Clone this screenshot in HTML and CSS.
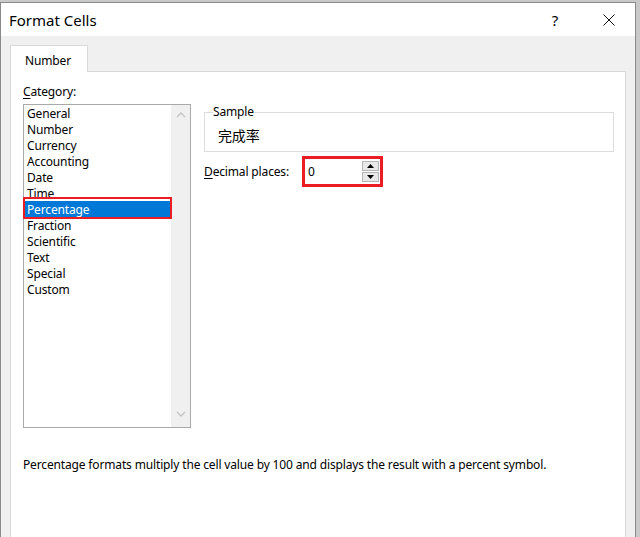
FILE: index.html
```html
<!DOCTYPE html>
<html lang="en">
<head>
<meta charset="UTF-8">
<meta name="viewport" content="width=device-width,initial-scale=1.0">
<title>Format Cells</title>
<link rel="stylesheet" href="styles.css">
</head>
<body>
<!-- ===== dialog window ===== -->
<div class="dialog">
  <div class="titlebar">
    <span class="title">Format Cells</span>
    <span class="help">?</span>
    <span class="close">
      <svg width="12" height="12" viewBox="0 0 12 12"><path d="M0.5 0.5L11.5 11.5M11.5 0.5L0.5 11.5" stroke="#111" stroke-width="1"/></svg>
    </span>
  </div>

  <div class="body">
    <div class="tabs">
      <div class="tab">Number</div>
    </div>

    <div class="panel">
      <div class="cols">
        <!-- category list -->
        <div class="cat-col">
          <div class="label"><u>C</u>ategory:</div>
          <div class="listbox">
            <ul class="items">
              <li>General</li>
              <li>Number</li>
              <li>Currency</li>
              <li>Accounting</li>
              <li>Date</li>
              <li>Time</li>
              <li class="selected">Percentage</li>
              <li>Fraction</li>
              <li>Scientific</li>
              <li>Text</li>
              <li>Special</li>
              <li>Custom</li>
            </ul>
            <div class="scrollbar">
              <svg width="10" height="6" viewBox="0 0 10 6"><path d="M1 5L5 1L9 5" fill="none" stroke="#c2c2c2" stroke-width="1.3"/></svg>
              <svg width="10" height="6" viewBox="0 0 10 6"><path d="M1 1L5 5L9 1" fill="none" stroke="#c2c2c2" stroke-width="1.3"/></svg>
            </div>
          </div>
        </div>

        <!-- options for the chosen format -->
        <div class="fmt-col">
          <fieldset class="sample">
            <legend>Sample</legend>
            <div class="sample-val">完成率</div>
          </fieldset>
          <div class="decimals">
            <label><u>D</u>ecimal places:</label>
            <div class="mark">
              <div class="spin">
                <span class="spin-val">0</span>
                <div class="spin-btns">
                  <div class="spin-btn"><svg width="7" height="4" viewBox="0 0 7 4"><path d="M0 4L3.5 0L7 4Z" fill="#000"/></svg></div>
                  <div class="spin-btn"><svg width="7" height="4" viewBox="0 0 7 4"><path d="M0 0L3.5 4L7 0Z" fill="#000"/></svg></div>
                </div>
              </div>
            </div>
          </div>
        </div>
      </div>

      <p class="desc">Percentage formats multiply the cell value by 100 and displays the result with a percent symbol.</p>
    </div>
  </div>
</div>
</body>
</html>
```

FILE: styles.css
```css
/* ==== general ==== */
*{box-sizing:border-box;margin:0;padding:0}
html,body{height:100%}
body{
  background:#c9c9c9;
  overflow:hidden;
  font-family:"Noto Sans","Noto Sans CJK SC",sans-serif;
  font-size:12px;
  letter-spacing:-0.15px;
  color:#000;
}
u{text-decoration:underline;text-underline-offset:2px}

/* ==== window ==== */
.dialog{
  margin-top:2px;
  width:636px;height:560px;
  border:1px solid #8a8a8a;border-bottom:none;
  background:#f0f0f0;
  display:flex;flex-direction:column;
}
.titlebar{
  height:33px;background:#fff;
  display:flex;align-items:center;
  padding-left:8px;
}
.title{font-size:15px;flex:1;padding-top:1px;letter-spacing:0}
.help{font-size:15px;margin-right:45px;padding-top:1px}
.close{display:flex;margin-right:20px}

/* ==== tab page ==== */
.body{flex:1;padding:9px 9px 0}
.tabs{display:flex;margin-bottom:-1px;position:relative;z-index:1}
.tab{
  width:78px;height:27px;
  background:#fff;
  border:1px solid #d9d9d9;border-bottom:none;
  padding:6px 0 0 14px;
}
.panel{
  background:#fff;border:1px solid #d9d9d9;
  height:480px;
  padding:12px 11px 0 12px;
}
.cols{display:flex;gap:13px;align-items:flex-start}

/* ==== category list ==== */
.label{line-height:16px}
.listbox{
  margin-top:4px;
  width:168px;height:324px;
  border:1px solid #a9a9a9;
  display:flex;
}
.items{list-style:none;width:147px}
.items li{line-height:17px;height:16px;padding-left:3px;white-space:nowrap}
.items li.selected{background:#0078d7;color:#fff;position:relative}
/* red annotation box drawn over the selected row */
.items li.selected::after{
  content:"";position:absolute;
  left:-1px;right:-1px;top:-4px;bottom:-2px;
  border:2px solid #ec1c24;
}
.scrollbar{
  flex:1;background:#f0f0f0;
  display:flex;flex-direction:column;justify-content:space-between;align-items:center;
  padding:7px 0 10px;
}

/* ==== right side ==== */
.fmt-col{flex:1;padding-top:20px}
.sample{
  border:1px solid #dcdcdc;
  padding:0 8px;
}
.sample legend{line-height:16px;padding:0}
.sample-val{font-size:14px;line-height:20px;padding:6px 0 5px 5px}
.decimals{display:flex;align-items:center;margin-top:4px}
.decimals label{width:98px;line-height:16px}
.mark{border:3px solid #ec1c24}
.spin{
  width:75px;height:25px;background:#fff;
  display:flex;align-items:center;
  padding:0 1px 0 3px;
}
.spin-val{flex:1}
.spin-btns{display:flex;flex-direction:column;gap:1px}
.spin-btn{
  width:17px;height:10px;
  background:#e8e8e8;border:1px solid #b4b4b4;
  display:flex;align-items:center;justify-content:center;
}
.desc{margin-top:29px;line-height:16px}
```
